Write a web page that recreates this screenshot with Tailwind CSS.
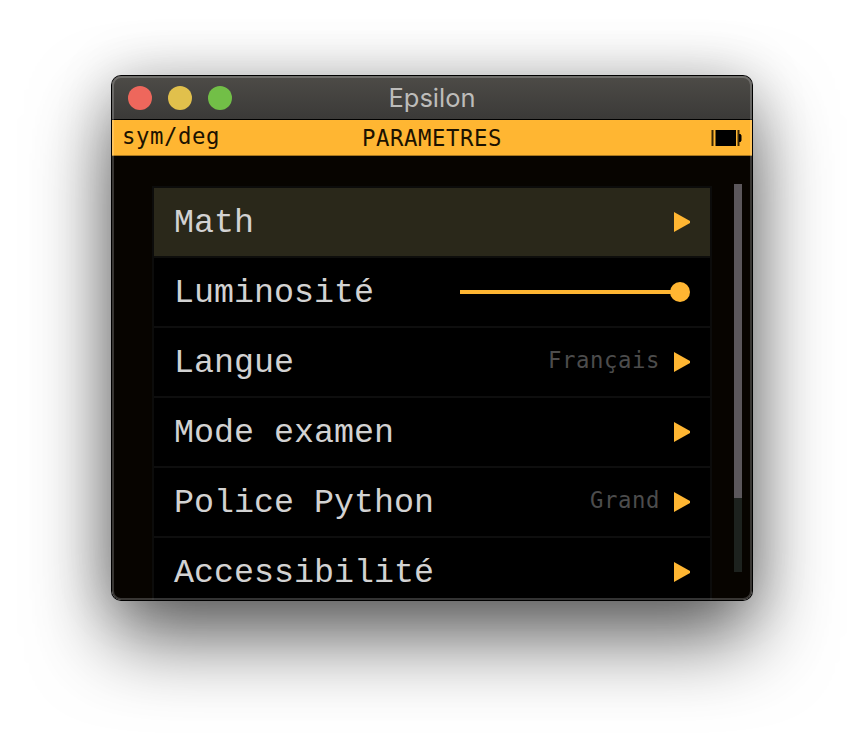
<!DOCTYPE html>
<html lang="fr">
<head>
<meta charset="utf-8">
<title>Epsilon</title>
<script src="https://cdn.jsdelivr.net/npm/@tailwindcss/browser@4"></script>
</head>
<body class="bg-white w-[864px] h-[748px] overflow-hidden px-[112px] pt-[76px]">
<div class="relative w-[640px] h-[524px] rounded-[9px] shadow-[0_0_0_1px_#000,0_38px_80px_rgba(0,0,0,0.62),0_0_56px_rgba(0,0,0,0.18)]">
  <div class="flex flex-col w-[640px] h-[524px] rounded-[9px] overflow-hidden bg-[#070400]">
    <!-- title bar -->
    <div class="grid grid-cols-3 items-center h-[44px] shrink-0 px-4 bg-linear-to-b from-[#4d4b47] to-[#3b3a38] border-b border-black">
      <div class="flex gap-4">
        <span class="size-6 rounded-full bg-[#ee675c]"></span>
        <span class="size-6 rounded-full bg-[#e1c04c]"></span>
        <span class="size-6 rounded-full bg-[#72bf47]"></span>
      </div>
      <div class="text-center font-[Inter,sans-serif] text-[25.5px] leading-[43px] tracking-[0px] text-[#bdbcba]">Epsilon</div>
    </div>
    <!-- status bar -->
    <div class="grid grid-cols-[1fr_140px_1fr] h-[36px] shrink-0 bg-[#ffb632] border-b border-[#a87820] pl-[10px] pr-[10px] text-[#1c1200] text-[22.3px] tracking-[0.57px] font-['DejaVu_Sans_Mono',monospace]">
      <div class="leading-[32px]">sym/deg</div>
      <div class="leading-[37px] whitespace-nowrap">PARAMETRES</div>
      <svg class="justify-self-end mt-[10px]" width="31" height="16" viewBox="0 0 31 16"><path fill="#392705" d="M0.5 0h2v16h-2zM26.500 0h2v16h-2z"/><path fill="#000" d="M4.500 0h20.500v16h-20.500zM28 4h1.500l1 1.500v5l-1 1.500h-1.500z"/></svg>
    </div>
    <!-- settings list -->
    <div class="flex grow min-h-0 overflow-hidden pl-[40px]">
      <div class="w-[560px] shrink-0 mt-[30px] border-2 border-b-0 border-[#0c0c0b] font-['Liberation_Mono',monospace] text-[33.33px] text-[#d2d2d2]">
        <div class="flex items-center justify-between h-[70px] pl-5 pr-5 bg-[#2a281a] border-b-2 border-[#0e0e0c]">
          <span class="leading-[66px] pt-[2px]">Math</span>
          <svg width="16" height="20"><path fill="#ffb632" d="M0 0L16 9v2L0 20z"/></svg>
        </div>
        <div class="flex items-center justify-between h-[70px] pl-5 pr-5 bg-black border-b-2 border-[#0e0e0e]">
          <span class="leading-[66px] pt-[2px]">Luminosité</span>
          <svg width="230" height="20"><path fill="#ffb632" d="M0 8h220v4H0z"/><circle cx="220" cy="10" r="10" fill="#ffb632"/></svg>
        </div>
        <div class="flex items-center h-[70px] pl-5 pr-5 bg-black border-b-2 border-[#0e0e0e]">
          <span class="leading-[66px] pt-[2px] grow">Langue</span>
          <span class="text-[22.3px] tracking-[0.57px] leading-[64px] pb-[4px] text-[#4c4c4c] mr-[14px] font-['DejaVu_Sans_Mono',monospace]">Français</span>
          <svg width="16" height="20"><path fill="#ffb632" d="M0 0L16 9v2L0 20z"/></svg>
        </div>
        <div class="flex items-center justify-between h-[70px] pl-5 pr-5 bg-black border-b-2 border-[#0e0e0e]">
          <span class="leading-[66px] pt-[2px]">Mode examen</span>
          <svg width="16" height="20"><path fill="#ffb632" d="M0 0L16 9v2L0 20z"/></svg>
        </div>
        <div class="flex items-center h-[70px] pl-5 pr-5 bg-black border-b-2 border-[#0e0e0e]">
          <span class="leading-[66px] pt-[2px] grow">Police Python</span>
          <span class="text-[22.3px] tracking-[0.57px] leading-[64px] pb-[4px] text-[#4c4c4c] mr-[14px] font-['DejaVu_Sans_Mono',monospace]">Grand</span>
          <svg width="16" height="20"><path fill="#ffb632" d="M0 0L16 9v2L0 20z"/></svg>
        </div>
        <div class="flex items-center justify-between h-[70px] pl-5 pr-5 bg-black border-b-2 border-[#0e0e0e]">
          <span class="leading-[66px] pt-[2px]">Accessibilité</span>
          <svg width="16" height="20"><path fill="#ffb632" d="M0 0L16 9v2L0 20z"/></svg>
        </div>
      </div>
      <!-- scrollbar -->
      <div class="ml-[22px] mt-[28px] w-2 h-[388px] bg-[#1d221e]">
        <div class="w-2 h-[314px] bg-[#5b575b]"></div>
      </div>
    </div>
  </div>
  <!-- window edge highlight -->
  <div class="absolute inset-0 rounded-[9px] border-2 border-white/20 pointer-events-none"></div>
</div>
</body>
</html>
